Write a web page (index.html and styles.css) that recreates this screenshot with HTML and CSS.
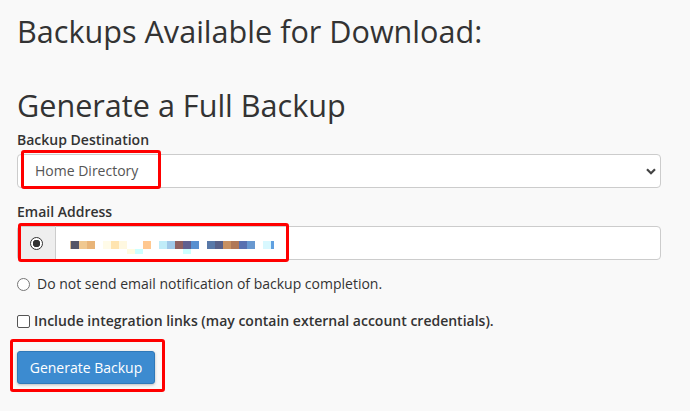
FILE: index.html
```html
<!DOCTYPE html>
<html lang="en">
<head>
<meta charset="utf-8">
<title>Backup</title>
<link rel="stylesheet" href="styles.css">
</head>
<body>
<div class="page">
  <h1 class="title">Backups Available for Download:</h1>
  <h2 class="subtitle">Generate a Full Backup</h2>

  <div class="field field-dest">
    <label class="field-label" for="dest">Backup Destination</label>
    <div class="select-wrap">
      <select id="dest" class="control select">
        <option>Home Directory</option>
      </select>
      <svg class="chevron" width="10" height="7" viewBox="0 0 10 7"><path d="M1 1.2 L5 5.2 L9 1.2" fill="none" stroke="#444" stroke-width="2.2"/></svg>
      <span class="highlight hl-dest"></span>
    </div>
  </div>

  <div class="field field-email">
    <label class="field-label" for="email">Email Address</label>
    <div class="input-group">
      <span class="addon"><input type="radio" name="notify" class="radio radio-on" checked></span>
      <div class="control email-input" id="email">
        <div class="blur">
          <span class="px c-edge"></span>
          <span class="px c1"></span><span class="px c2"></span><span class="px c3"></span>
          <span class="px c0"></span>
          <span class="px c4"></span><span class="px c5"></span><span class="px c6"></span>
          <span class="px c7"><i class="lo c7b"></i></span>
          <span class="px c8"><i class="lo c8b"></i></span>
          <span class="px c9"></span>
          <span class="px c0"></span>
          <span class="px c10"></span><span class="px c11"></span><span class="px c12"></span>
          <span class="px c13"><i class="lo c13b"></i></span>
          <span class="px c14"></span>
          <span class="px c0"></span>
          <span class="px c15"></span><span class="px c16"></span><span class="px c17"></span><span class="px c18"></span><span class="px c19"></span><span class="px c20"></span>
          <span class="px c0"></span>
          <span class="px c21"></span><span class="px c22"></span>
        </div>
      </div>
      <span class="highlight hl-email"></span>
    </div>
  </div>

  <label class="option option-radio">
    <input type="radio" name="notify" class="radio">
    <span>Do not send email notification of backup completion.</span>
  </label>

  <label class="option option-check">
    <input type="checkbox" class="check">
    <span>Include integration links (may contain external account credentials).</span>
  </label>

  <div class="actions">
    <button class="btn-primary" type="button">Generate Backup</button>
    <span class="highlight hl-btn"></span>
  </div>
</div>
</body>
</html>
```

FILE: styles.css
```css
* { box-sizing: border-box; }

html, body {
  margin: 0;
  padding: 0;
  background: #f9f9f9;
}

body {
  font-family: "Open Sans", "Noto Sans", sans-serif;
  color: #333;
  font-size: 14px;
  line-height: 20px;
}

.page {
  padding: 15px 29px 27px 17px;
}

.title {
  margin: 0;
  font-size: 30.6px;
  line-height: 33px;
  font-weight: 400;
  color: #333;
}

.subtitle {
  margin: 42px 0 0;
  font-size: 30.6px;
  line-height: 31px;
  font-weight: 400;
  color: #333;
}

.field-dest { margin-top: 9px; }
.field-email { margin-top: 14px; }

.field-label {
  display: block;
  font-weight: 600;
  font-size: 14px;
  line-height: 20px;
  margin-bottom: 4px;
}

.select-wrap,
.input-group {
  position: relative;
  width: 644px;
}

.control {
  height: 34px;
  width: 100%;
  background: #fff;
  border: 1px solid #ccc;
  border-radius: 4px;
  font-family: "Open Sans", "Noto Sans", sans-serif;
  font-size: 14px;
  color: #555;
}

.select {
  display: block;
  appearance: none;
  -webkit-appearance: none;
  padding: 0 30px 0 17px;
  line-height: 32px;
}

.chevron {
  position: absolute;
  right: 5px;
  top: 14px;
  pointer-events: none;
}

.input-group {
  display: flex;
  height: 34px;
}

.addon {
  width: 38px;
  flex: none;
  background: #eee;
  border: 1px solid #ccc;
  border-right: none;
  border-radius: 4px 0 0 4px;
  display: flex;
  align-items: center;
  justify-content: center;
}

.email-input {
  flex: 1;
  border-radius: 0 4px 4px 0;
  display: flex;
  align-items: flex-start;
  padding: 14px 0 0 14px;
}

.blur {
  display: flex;
  align-items: flex-start;
}

.px {
  position: relative;
  display: block;
  width: 8px;
  height: 8px;
}
.px .lo {
  position: absolute;
  left: 0;
  top: 8px;
  width: 8px;
  height: 5px;
}

.c-edge { width: 1px; background: #d8b890; }
.c0 { background: transparent; }
.c1 { background: #555566; }
.c2 { background: #f0c890; }
.c3 { background: #e8b478; }
.c4 { background: #fffbe8; }
.c5 { background: #ffe4b0; }
.c6 { background: #fff8e0; }
.c7 { background: transparent; }
.c7b { background: #fffce0; }
.c8 { background: transparent; }
.c8b { background: #ccffff; }
.c9 { background: #ffc890; }
.c10 { background: #c0ecf8; }
.c11 { background: #a0c8e8; }
.c12 { background: #906060; }
.c13 { background: #606090; }
.c13b { background: #ccffff; }
.c14 { background: #5890d0; }
.c15 { background: #5878a8; }
.c16 { background: #586088; }
.c17 { background: #c89060; }
.c18 { background: #b07858; }
.c19 { background: #5870b0; }
.c20 { background: #6898d0; }
.c21 { background: #d8f8ff; }
.c22 { width: 3px; background: #60a0e0; }

.radio,
.check {
  appearance: none;
  -webkit-appearance: none;
  margin: 0;
  width: 13px;
  height: 13px;
  flex: none;
  background: #fff;
  border: 1px solid #767676;
}

.radio { border-radius: 50%; position: relative; }
.check { border-radius: 2px; border-color: #555; }

.radio-on {
  border-color: #333;
  background: radial-gradient(circle, #333 0 3.5px, #fff 4px);
}

.option {
  display: flex;
  align-items: center;
  font-size: 14px;
  line-height: 20px;
  color: #333;
}

.option-radio {
  margin-top: 14px;
  gap: 7px;
}
.option-check {
  margin-top: 17px;
  gap: 4px;
  font-weight: 600;
}

.actions {
  position: relative;
  margin-top: 20px;
  width: 138px;
}

.btn-primary {
  display: block;
  width: 138px;
  height: 33px;
  border: 1px solid #2f79b9;
  border-radius: 3px;
  background: #3c8bd0;
  color: #fff;
  font-family: "Open Sans", "Noto Sans", sans-serif;
  font-size: 14px;
  white-space: nowrap;
  padding: 0;
  text-align: center;
  box-shadow: 0 1px 3px rgba(0,0,0,0.25);
  cursor: pointer;
}

.highlight {
  position: absolute;
  border: 3px solid #ff0000;
  border-radius: 3px;
  pointer-events: none;
}
.hl-dest { left: 4px; top: -4px; width: 140px; height: 39px; }
.hl-email { left: 1px; top: -3px; width: 271px; height: 39px; }
.hl-btn { left: -7px; top: -12px; width: 155px; height: 53px; }
```
